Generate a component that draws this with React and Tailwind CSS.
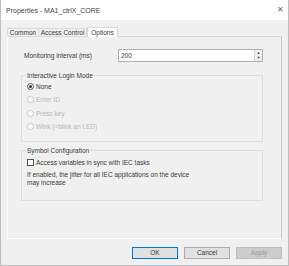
import React from 'react';

const Radio = ({ label, checked = false, disabled = false }) => (
    <div className="flex items-center h-[13.5px] pl-[5px] gap-[2px]">
        <span
            className={`w-[7px] h-[7px] rounded-full border flex items-center justify-center bg-white ${disabled ? 'border-[#c6c6c6]' : 'border-[#555]'}`}
        >
            {checked && <span className="w-[3px] h-[3px] rounded-full bg-[#333]" />}
        </span>
        <span className={disabled ? 'text-[#b8b8b8]' : 'text-[#3a3a3a]'}>{label}</span>
    </div>
);

const Button = ({ children, variant = 'default' }) => {
    const styles = {
        primary: 'bg-[#e1e1e1] border-[#0078d7] text-[#3a3a3a]',
        default: 'bg-[#e1e1e1] border-[#adadad] text-[#3a3a3a]',
        disabled: 'bg-[#cccccc] border-[#bfbfbf] text-[#9a9a9a]'
    };
    return (
        <button className={`w-[46px] h-[12px] border flex items-center justify-center leading-none ${styles[variant]}`}>
            {children}
        </button>
    );
};

export default function App() {
    return (
        <div className="w-[289px] h-[266px] flex flex-col bg-[#f0f0f0] border-x border-b border-[#bdbdbd] font-['Liberation_Sans',sans-serif] text-[6.5px] leading-[9px] text-[#3a3a3a]">
            {/* Title bar */}
            <div className="h-[20px] shrink-0 bg-white flex items-center justify-between pl-[5px] pr-[4px]">
                <span className="text-[7px] text-[#444]">Properties - MA1_ctrlX_CORE</span>
                <span className="text-[8px] text-[#666] leading-none">✕</span>
            </div>

            {/* Tabs */}
            <div className="flex items-end h-[9px] mt-[7px] pl-[6px]">
                <div className="w-[32px] h-[8px] border border-b-0 border-[#d9d9d9] flex items-center justify-center">Common</div>
                <div className="w-[48px] h-[8px] border border-b-0 border-l-0 border-[#d9d9d9] flex items-center justify-center">Access Control</div>
                <div className="w-[31px] h-[10px] -mb-px bg-white border border-b-0 border-[#d9d9d9] flex items-center justify-center z-10">Options</div>
            </div>

            {/* Tab page */}
            <div className="ml-[6px] mr-[6px] h-[203px] border border-t-[#d9d9d9] border-l-white border-b-white border-r-[#c8c8c8] flex flex-col pt-[12px] pl-[16px] pr-[18px]">
                <div className="flex items-center h-[13px]">
                    <span className="w-[94px]">Monitoring interval (ms)</span>
                    <div className="flex-1 h-[13px] bg-white border border-[#b0b0b0] flex items-center pl-[2px]">
                        <span className="flex-1">200</span>
                        <div className="w-[8px] h-full flex flex-col border-l border-[#d0d0d0] bg-[#f0f0f0]">
                            <span className="flex-1 flex items-center justify-center text-[4px] leading-none text-[#444]">▲</span>
                            <span className="flex-1 flex items-center justify-center text-[4px] leading-none text-[#444]">▼</span>
                        </div>
                    </div>
                </div>

                <fieldset className="mt-[8.5px] -ml-[3px] w-[242px] border border-[#dcdcdc] pb-[7.5px]">
                    <legend className="ml-[4px] px-[1px]">Interactive Login Mode</legend>
                    <Radio label="None" checked />
                    <Radio label="Enter ID" disabled />
                    <Radio label="Press key" disabled />
                    <Radio label="Wink (=blink an LED)" disabled />
                </fieldset>

                <fieldset className="mt-[3.5px] -ml-[3px] w-[242px] border border-[#dcdcdc] pt-[2px] pb-[13px] pl-[5px]">
                    <legend className="-ml-[1px] px-[1px]">Symbol Configuration</legend>
                    <div className="flex items-center h-[11px] gap-[2px]">
                        <span className="w-[7px] h-[7px] border border-[#555] bg-white" />
                        <span>Access variables in sync with IEC tasks</span>
                    </div>
                    <div className="mt-[3.5px] leading-[8px]">
                        If enabled, the jitter for all IEC applications on the device
                        <br />
                        may increase
                    </div>
                </fieldset>
            </div>

            {/* Buttons */}
            <div className="flex justify-end gap-[6px] mt-[8px] pr-[6px]">
                <Button variant="primary">OK</Button>
                <Button>Cancel</Button>
                <Button variant="disabled">Apply</Button>
            </div>
        </div>
    );
}
